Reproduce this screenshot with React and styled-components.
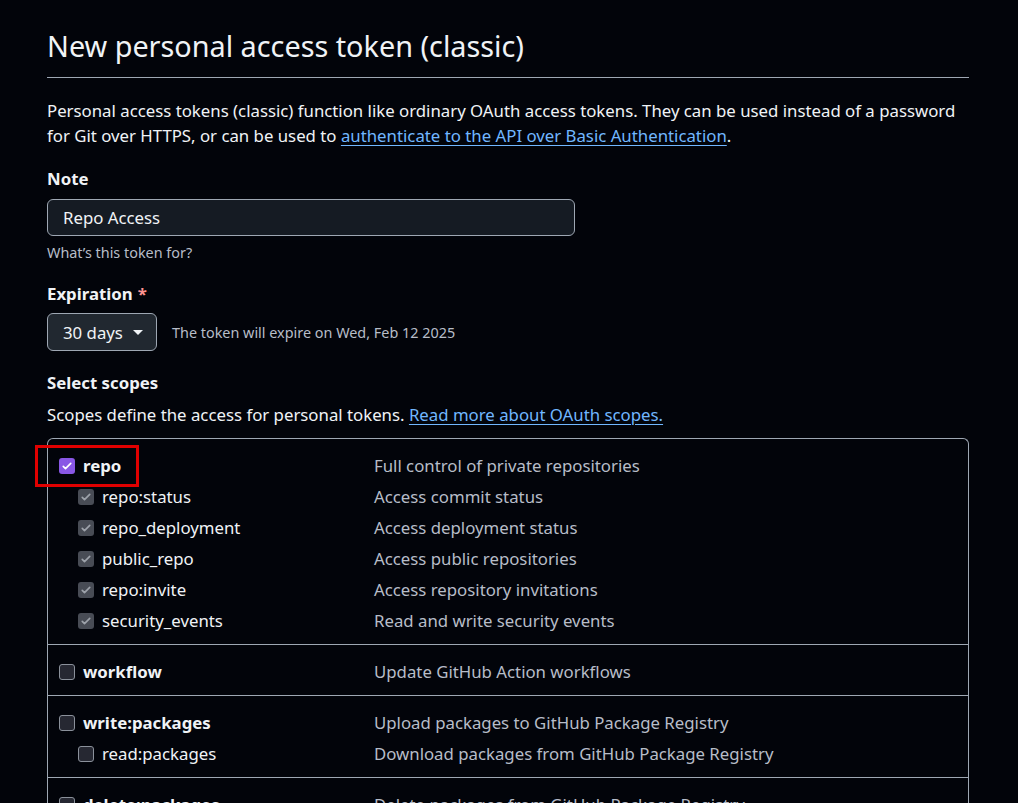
import React from "react";
import styled, { createGlobalStyle } from "styled-components";

const Global = createGlobalStyle`
  html, body { margin: 0; padding: 0; background: #02040a; }
  body { font-family: "Noto Sans", "Open Sans", sans-serif; color: #f0f3f6; }
  * { box-sizing: border-box; }
`;

const Page = styled.div`
  padding: 26px 0 0 47px;
  width: 969px;
`;

const Title = styled.h2`
  margin: 0;
  font-size: 28.8px;
  font-weight: 400;
  line-height: 40px;
  padding-bottom: 11px;
  border-bottom: 1px solid #9ea7b3;
  color: #f0f3f6;
`;

const Lead = styled.p`
  margin: 20px 0 0;
  font-size: 16.8px;
  line-height: 25px;
  color: #f0f3f6;
`;

const Link = styled.a`
  color: #71b7ff;
  text-decoration: underline;
  text-underline-offset: 3px;
`;

const Field = styled.div`
  margin-top: ${(p) => p.$mt || 0}px;
  display: flex;
  flex-direction: column;
  align-items: flex-start;
`;

const Label = styled.div`
  font-size: 16.8px;
  font-weight: 700;
  line-height: 24px;
  color: #f0f3f6;
`;

const Star = styled.span`
  color: #ff9492;
  margin-left: 5px;
`;

const Input = styled.div`
  margin-top: 8px;
  width: 528px;
  height: 37px;
  border: 1px solid #9ea7b3;
  border-radius: 6px;
  background: #151b23;
  padding: 0 15px;
  display: flex;
  align-items: center;
  font-size: 16.8px;
  color: #f0f3f6;
`;

const Hint = styled.div`
  margin-top: 7px;
  font-size: 14.4px;
  line-height: 20px;
  color: #b7bdc8;
`;

const Row = styled.div`
  display: flex;
  align-items: center;
  gap: 15px;
  margin-top: 7px;
`;

const Select = styled.div`
  width: 110px;
  height: 38px;
  border: 1px solid #9ea7b3;
  border-radius: 6px;
  background: #212830;
  display: flex;
  align-items: center;
  padding-left: 15px;
  gap: 10px;
  font-size: 16.8px;
  color: #f0f3f6;
`;

const Caret = styled.span`
  width: 0;
  height: 0;
  border-left: 5px solid transparent;
  border-right: 5px solid transparent;
  border-top: 5px solid #f0f3f6;
`;

const Note = styled.div`
  font-size: 14.4px;
  color: #b7bdc8;
`;

const Sub = styled.div`
  margin-top: 8px;
  font-size: 16.8px;
  line-height: 24px;
  color: #f0f3f6;
`;

const Table = styled.div`
  margin-top: 11px;
  width: 922px;
  border: 1px solid #9ea7b3;
  border-bottom: none;
  border-radius: 6px 6px 0 0;
`;

const Group = styled.div`
  padding: 11px 0 8px;
  border-top: ${(p) => (p.$first ? "none" : "1px solid #9ea7b3")};
`;

const Item = styled.div`
  position: relative;
  display: grid;
  grid-template-columns: 326px 1fr;
  height: 31px;
  align-items: center;
  font-size: 16.8px;
`;

const Name = styled.div`
  display: flex;
  align-items: center;
  gap: 8px;
  padding-left: ${(p) => (p.$child ? 30 : 11)}px;
  font-weight: ${(p) => (p.$child ? 400 : 700)};
  color: #f0f3f6;
`;

const Desc = styled.div`
  color: #b7bdc8;
`;

const Box = styled.span`
  width: 16px;
  height: 16px;
  border-radius: 3px;
  display: inline-flex;
  align-items: center;
  justify-content: center;
  flex: none;
  background: ${(p) =>
    p.$state === "on" ? "#8957e5" : p.$state === "dis" ? "#484c55" : "#262832"};
  border: ${(p) => (p.$state === "off" ? "1.5px solid #8b919b" : "none")};
`;

const Highlight = styled.div`
  position: absolute;
  left: -13px;
  top: -5px;
  width: 104px;
  height: 42px;
  border: 3px solid #e00000;
  pointer-events: none;
`;

const Check = ({ color }) => (
  <svg width="12" height="12" viewBox="0 0 16 16">
    <path
      d="M3 8.5l3 3 7-7"
      fill="none"
      stroke={color}
      strokeWidth="2.2"
      strokeLinecap="round"
      strokeLinejoin="round"
    />
  </svg>
);

const groups = [
  {
    name: "repo",
    desc: "Full control of private repositories",
    state: "on",
    highlight: true,
    children: [
      ["repo:status", "Access commit status"],
      ["repo_deployment", "Access deployment status"],
      ["public_repo", "Access public repositories"],
      ["repo:invite", "Access repository invitations"],
      ["security_events", "Read and write security events"],
    ],
    childState: "dis",
  },
  { name: "workflow", desc: "Update GitHub Action workflows", state: "off", children: [] },
  {
    name: "write:packages",
    desc: "Upload packages to GitHub Package Registry",
    state: "off",
    children: [["read:packages", "Download packages from GitHub Package Registry"]],
    childState: "off",
  },
  { name: "delete:packages", desc: "Delete packages from GitHub Package Registry", state: "off", children: [] },
];

const CheckBox = ({ state }) => (
  <Box $state={state}>
    {state === "on" && <Check color="#ffffff" />}
    {state === "dis" && <Check color="#9ea3ab" />}
  </Box>
);

export default function App() {
  return (
    <>
      <Global />
      <Page>
        <Title>New personal access token (classic)</Title>
        <Lead>
          Personal access tokens (classic) function like ordinary OAuth access tokens. They can be used instead of a password
          for Git over HTTPS, or can be used to{" "}
          <Link href="#">authenticate to the API over Basic Authentication</Link>.
        </Lead>
        <Field $mt={19}>
          <Label>Note</Label>
          <Input>Repo Access</Input>
          <Hint>What’s this token for?</Hint>
        </Field>
        <Field $mt={19}>
          <Label>
            Expiration<Star>*</Star>
          </Label>
          <Row>
            <Select>
              30 days <Caret />
            </Select>
            <Note>The token will expire on Wed, Feb 12 2025</Note>
          </Row>
        </Field>
        <Field $mt={20}>
          <Label>Select scopes</Label>
          <Sub>
            Scopes define the access for personal tokens.{" "}
            <Link href="#">Read more about OAuth scopes.</Link>
          </Sub>
        </Field>
        <Table>
          {groups.map((g, i) => (
            <Group key={g.name} $first={i === 0}>
              <Item>
                <Name>
                  <CheckBox state={g.state} />
                  {g.name}
                </Name>
                <Desc>{g.desc}</Desc>
                {g.highlight && <Highlight />}
              </Item>
              {g.children.map(([n, d]) => (
                <Item key={n}>
                  <Name $child>
                    <CheckBox state={g.childState} />
                    {n}
                  </Name>
                  <Desc>{d}</Desc>
                </Item>
              ))}
            </Group>
          ))}
        </Table>
      </Page>
    </>
  );
}
